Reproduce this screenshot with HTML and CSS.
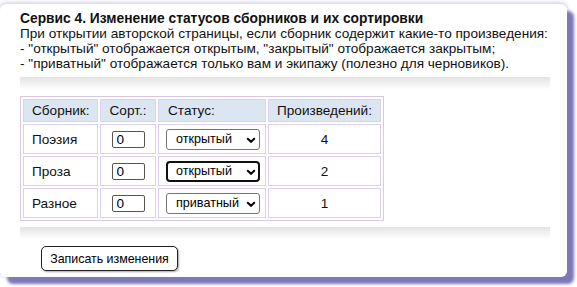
FILE: index.html
```html
<!DOCTYPE html>
<html lang="ru">
<head>
<meta charset="utf-8">
<link rel="stylesheet" href="styles.css">
</head>
<body>
<div class="card">
  <div class="intro">
    <div class="title">Сервис 4. Изменение статусов сборников и их сортировки</div>
    <div>При открытии авторской страницы, если сборник содержит какие-то произведения:</div>
    <div>- "открытый" отображается открытым, "закрытый" отображается закрытым;</div>
    <div>- "приватный" отображается только вам и экипажу (полезно для черновиков).</div>
  </div>
  <div class="shade shade-top"></div>
  <table class="tbl">
    <tr>
      <th class="c1">Сборник:</th>
      <th class="c2">Сорт.:</th>
      <th class="c3">Статус:</th>
      <th class="c4">Произведений:</th>
    </tr>
    <tr>
      <td class="c1">Поэзия</td>
      <td class="c2"><input class="sort" type="text" value="0"></td>
      <td class="c3"><span class="sel"><select><option>открытый</option><option>закрытый</option><option>приватный</option></select><svg class="chev" viewBox="0 0 10 6" width="10" height="6"><path d="M1.2 1.2 L5 4.8 L8.8 1.2" fill="none" stroke="#000" stroke-width="2"/></svg></span></td>
      <td class="c4">4</td>
    </tr>
    <tr>
      <td class="c1">Проза</td>
      <td class="c2"><input class="sort" type="text" value="0"></td>
      <td class="c3"><span class="sel"><select class="focused"><option>открытый</option><option>закрытый</option><option>приватный</option></select><svg class="chev" viewBox="0 0 10 6" width="10" height="6"><path d="M1.2 1.2 L5 4.8 L8.8 1.2" fill="none" stroke="#000" stroke-width="2"/></svg></span></td>
      <td class="c4">2</td>
    </tr>
    <tr>
      <td class="c1">Разное</td>
      <td class="c2"><input class="sort" type="text" value="0"></td>
      <td class="c3"><span class="sel"><select><option>приватный</option><option>открытый</option><option>закрытый</option></select><svg class="chev" viewBox="0 0 10 6" width="10" height="6"><path d="M1.2 1.2 L5 4.8 L8.8 1.2" fill="none" stroke="#000" stroke-width="2"/></svg></span></td>
      <td class="c4">1</td>
    </tr>
  </table>
  <div class="shade shade-bottom"></div>
  <button class="save" type="button">Записать изменения</button>
</div>
</body>
</html>
```
FILE: styles.css
```css
html, body {
  margin: 0;
  padding: 0;
  background: #ffffff;
}
body {
  padding: 4px 10px 10px 0;
  overflow: hidden;
}
.card {
  width: 567px;
  height: 273px;
  box-sizing: border-box;
  background: #fff;
  border-radius: 6px;
  box-shadow: 7px 7px 3px #7d79b7, 0 -1px 4px rgba(125, 120, 185, 0.45);
  padding: 7px 17px 0 20px;
  font-family: "Liberation Sans", Arial, sans-serif;
  font-size: 13.6px;
  line-height: 15px;
  color: #111;
}
.title {
  font-weight: bold;
  font-size: 13.8px;
}
.shade {
  width: 530px;
  background: linear-gradient(to bottom, #e3e3e3, #ffffff);
}
.shade-top {
  height: 13px;
  margin-top: 6px;
}
.shade-bottom {
  height: 12px;
  margin-top: 6px;
}
.tbl {
  margin-top: 6px;
  width: 362px;
  table-layout: fixed;
  border: 1px solid #d6c8e6;
  border-collapse: separate;
  border-spacing: 2px;
  font-size: 13.6px;
  line-height: 15px;
}
.tbl th, .tbl td {
  border: 1px solid #ddd0ee;
  padding: 3px 8px;
  font-weight: normal;
  box-sizing: border-box;
  white-space: nowrap;
}
.tbl th {
  background: #dce6f2;
}
.tbl td {
  height: 30px;
}
.c1 { width: 75px; text-align: left; }
.c2 { width: 56px; text-align: center; }
.c3 { width: 108px; text-align: left; }
.c4 { width: 113px; text-align: center; }
.tbl th.c3 { padding-left: 9px; }
.tbl td.c3 { padding-left: 7px; padding-right: 4px; }
.tbl .c4 { padding-left: 4px; padding-right: 4px; }
.sort {
  width: 33px;
  height: 17px;
  box-sizing: border-box;
  border: 1px solid #555;
  border-radius: 2px;
  padding: 0 0 0 4px;
  font-family: "Liberation Sans", Arial, sans-serif;
  font-size: 13.6px;
  color: #000;
  vertical-align: middle;
}
.sel {
  position: relative;
  display: inline-block;
  vertical-align: middle;
}
.sel select {
  appearance: none;
  -webkit-appearance: none;
  width: 94px;
  height: 21px;
  box-sizing: border-box;
  border: 1px solid #767676;
  border-radius: 3px;
  background: #fff;
  padding: 0 0 0 9px;
  font-family: "Liberation Sans", Arial, sans-serif;
  font-size: 12.6px;
  color: #000;
  display: block;
}
.sel select.focused {
  border: 2px solid #101010;
  border-radius: 4px;
  padding-left: 8px;
}
.chev {
  position: absolute;
  right: 4px;
  top: 8px;
  pointer-events: none;
}
.save {
  display: block;
  margin: 7px 0 0 21px;
  width: 137px;
  height: 25px;
  box-sizing: border-box;
  background: #fff;
  border: 1px solid #222;
  border-radius: 5px;
  box-shadow: 1px 1px 2px rgba(0, 0, 0, 0.35);
  font-family: "Liberation Sans", Arial, sans-serif;
  font-size: 12.4px;
  color: #000;
  padding: 0;
}
```
